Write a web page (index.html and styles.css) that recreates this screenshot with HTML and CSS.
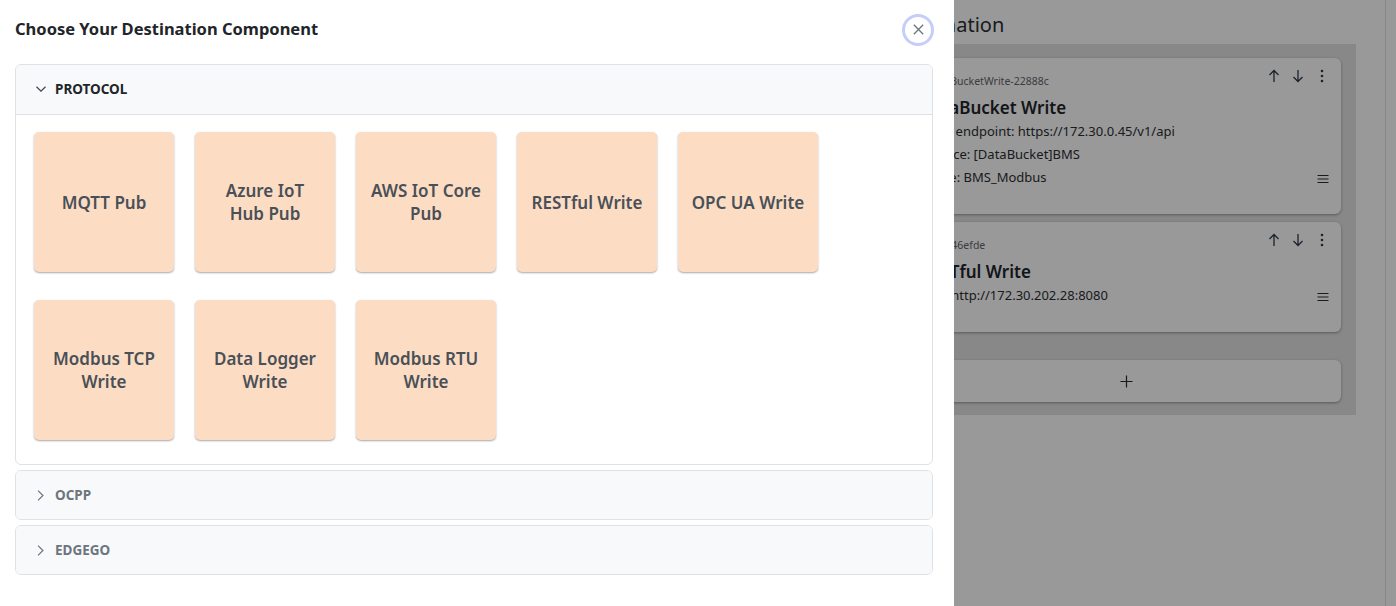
FILE: index.html
```html
<!DOCTYPE html>
<html lang="en">
<head>
<meta charset="utf-8">
<title>Choose Your Destination Component</title>
<link rel="stylesheet" href="styles.css">
</head>
<body>
<div class="page">
  <div class="source-col"></div>
  <main class="dest-col">
    <h2 class="page-title">Destination</h2>
    <div class="flow-panel">
      <div class="node-card">
        <div class="node-head">
          <span class="node-id">DataBucketWrite-22888c</span>
          <span class="node-tools">
            <svg class="tool" viewBox="0 0 16 16"><path d="M8 14V2.5M3.5 7L8 2.5 12.5 7"/></svg>
            <svg class="tool" viewBox="0 0 16 16"><path d="M8 2v11.5M3.5 9L8 13.5 12.5 9"/></svg>
            <svg class="tool dots" viewBox="0 0 16 16"><circle cx="8" cy="3" r="1.3"/><circle cx="8" cy="8" r="1.3"/><circle cx="8" cy="13" r="1.3"/></svg>
          </span>
        </div>
        <div class="node-title">DataBucket Write</div>
        <div class="node-line">HTTP endpoint: https://172.30.0.45/v1/api</div>
        <div class="node-line shifted">Source: [DataBucket]BMS</div>
        <div class="node-line">Name: BMS_Modbus</div>
        <svg class="drag" viewBox="0 0 16 16"><path d="M2.5 4.5h11M2.5 8h11M2.5 11.5h11"/></svg>
      </div>
      <div class="node-card">
        <div class="node-head">
          <span class="node-id">a9d346efde</span>
          <span class="node-tools">
            <svg class="tool" viewBox="0 0 16 16"><path d="M8 14V2.5M3.5 7L8 2.5 12.5 7"/></svg>
            <svg class="tool" viewBox="0 0 16 16"><path d="M8 2v11.5M3.5 9L8 13.5 12.5 9"/></svg>
            <svg class="tool dots" viewBox="0 0 16 16"><circle cx="8" cy="3" r="1.3"/><circle cx="8" cy="8" r="1.3"/><circle cx="8" cy="13" r="1.3"/></svg>
          </span>
        </div>
        <div class="node-title">RESTful Write</div>
        <div class="node-line">URL: http://172.30.202.28:8080</div>
        <svg class="drag" viewBox="0 0 16 16"><path d="M2.5 4.5h11M2.5 8h11M2.5 11.5h11"/></svg>
      </div>
      <button class="add-card" type="button">
        <svg viewBox="0 0 16 16"><path d="M8 1.5v13M1.5 8h13"/></svg>
      </button>
    </div>
  </main>
  <aside class="side-col"></aside>
</div>

<div class="backdrop"></div>

<section class="offcanvas">
  <header class="oc-header">
    <h5 class="oc-title">Choose Your Destination Component</h5>
    <button class="btn-close" type="button" aria-label="Close">
      <svg viewBox="0 0 16 16"><path d="M3 3l10 10M13 3L3 13"/></svg>
    </button>
  </header>
  <div class="oc-body">
    <div class="acc-item open">
      <div class="acc-header">
        <svg class="chev" viewBox="0 0 16 16"><path d="M2 5l6 6 6-6"/></svg>
        <span>PROTOCOL</span>
      </div>
      <div class="acc-body">
        <div class="tile">MQTT Pub</div>
        <div class="tile">Azure IoT Hub Pub</div>
        <div class="tile">AWS IoT Core Pub</div>
        <div class="tile">RESTful Write</div>
        <div class="tile">OPC UA Write</div>
        <div class="tile">Modbus TCP Write</div>
        <div class="tile">Data Logger Write</div>
        <div class="tile">Modbus RTU Write</div>
      </div>
    </div>
    <div class="acc-item">
      <div class="acc-header">
        <svg class="chev right" viewBox="0 0 16 16"><path d="M5 2l6 6-6 6"/></svg>
        <span>OCPP</span>
      </div>
    </div>
    <div class="acc-item">
      <div class="acc-header">
        <svg class="chev right" viewBox="0 0 16 16"><path d="M5 2l6 6-6 6"/></svg>
        <span>EDGEGO</span>
      </div>
    </div>
  </div>
</section>
</body>
</html>
```

FILE: styles.css
```css
* { box-sizing: border-box; }

html, body {
  margin: 0;
  height: 100%;
}

body {
  font-family: "Noto Sans", "Open Sans", sans-serif;
  color: #212529;
  background: #ffffff;
  overflow: hidden;
}

/* ---------- underlying page ---------- */
.page {
  display: flex;
  height: 100%;
}

.source-col {
  flex: 1;
}

.dest-col {
  width: 460px;
  padding-top: 11px;
  margin-right: 29px;
}

.page-title {
  margin: 0 0 5px;
  font-size: 20px;
  font-weight: 400;
  line-height: 28px;
  color: #2b2f33;
}

.flow-panel {
  background: #e3e3e3;
  padding: 14px 15px 13px;
  display: flex;
  flex-direction: column;
}

.node-card {
  position: relative;
  background: #ffffff;
  border-radius: 6px;
  box-shadow: 0 1px 3px rgba(0, 0, 0, 0.35);
  padding: 12px 16px 25px 9px;
  margin-bottom: 8px;
}

.node-head {
  display: flex;
  justify-content: space-between;
  align-items: flex-start;
  height: 20px;
}

.node-id {
  margin-left: 7px;
  margin-top: 1px;
  font-size: 10.5px;
  line-height: 20px;
  color: #5f666d;
}

.node-tools {
  display: flex;
  gap: 8px;
  margin-top: -2px;
  margin-right: -5px;
}

.tool {
  width: 16px;
  height: 16px;
  fill: none;
  stroke: #2f3a4a;
  stroke-width: 1.3;
}

.tool.dots {
  fill: #2f3a4a;
  stroke: none;
}

.node-title {
  margin-top: 6px;
  font-size: 17px;
  font-weight: 600;
  line-height: 24px;
}

.node-line {
  font-size: 13px;
  line-height: 23px;
  color: #2b2f33;
}

.node-line.shifted {
  padding-left: 5px;
}

.drag {
  position: absolute;
  right: 10px;
  bottom: 27px;
  width: 16px;
  height: 16px;
  fill: none;
  stroke: #2b2f33;
  stroke-width: 1.2;
}

.add-card {
  margin-top: 20px;
  height: 42px;
  border: 0;
  border-radius: 6px;
  background: #ffffff;
  box-shadow: 0 1px 3px rgba(0, 0, 0, 0.35);
  display: flex;
  align-items: center;
  justify-content: center;
}

.add-card svg {
  width: 15px;
  height: 15px;
  fill: none;
  stroke: #2b2f33;
  stroke-width: 1.3;
}

.side-col {
  width: 11px;
  border-left: 1px solid #dee2e6;
}

/* ---------- backdrop ---------- */
.backdrop {
  position: fixed;
  inset: 0;
  background: rgba(0, 0, 0, 0.4);
}

/* ---------- offcanvas ---------- */
.offcanvas {
  position: fixed;
  top: 0;
  left: 0;
  bottom: 0;
  width: 954px;
  background: #ffffff;
  display: flex;
  flex-direction: column;
}

.oc-header {
  display: flex;
  align-items: center;
  justify-content: space-between;
  padding: 16px 23px 0 15px;
  height: 42px;
}

.oc-title {
  margin: 0;
  font-size: 16.5px;
  font-weight: 700;
  line-height: 26px;
  color: #212529;
}

.btn-close {
  width: 26px;
  height: 26px;
  margin-top: 1px;
  padding: 0;
  border: 0;
  border-radius: 50%;
  background: #ffffff;
  box-shadow: 0 0 0 3px #c6cdfa;
  display: flex;
  align-items: center;
  justify-content: center;
}

.btn-close svg {
  width: 15px;
  height: 15px;
  fill: none;
  stroke: #6c757d;
  stroke-width: 1.4;
}

.oc-body {
  padding: 22px 21px 0 15px;
  display: flex;
  flex-direction: column;
  gap: 5px;
}

.acc-item {
  border: 1px solid #dee2e6;
  border-radius: 6px;
  background: #f8f9fa;
  overflow: hidden;
}

.acc-item.open {
  background: #ffffff;
}

.acc-header {
  height: 48px;
  display: flex;
  align-items: center;
  gap: 8px;
  padding-left: 19px;
  background: #f8f9fa;
  font-size: 13.5px;
  font-weight: 700;
  color: #6c757d;
}

.acc-item.open .acc-header {
  height: 50px;
  padding-bottom: 1px;
  border-bottom: 1px solid #dee2e6;
  color: #212529;
}

.chev {
  width: 12px;
  height: 12px;
  fill: none;
  stroke: #3b4047;
  stroke-width: 1.5;
}

.chev.right {
  width: 13px;
  height: 13px;
  margin-left: -1px;
  stroke: #6c757d;
}

.acc-body {
  display: grid;
  grid-template-columns: repeat(5, 140px);
  gap: 28px 21px;
  padding: 17px 18px 24px;
}

.tile {
  height: 140px;
  padding: 0 13px;
  display: flex;
  align-items: center;
  justify-content: center;
  text-align: center;
  background: #fddcc4;
  border-radius: 5px;
  box-shadow: 0 1px 2px rgba(0, 0, 0, 0.35);
  font-size: 17px;
  font-weight: 600;
  line-height: 23px;
  color: #495057;
}
```
